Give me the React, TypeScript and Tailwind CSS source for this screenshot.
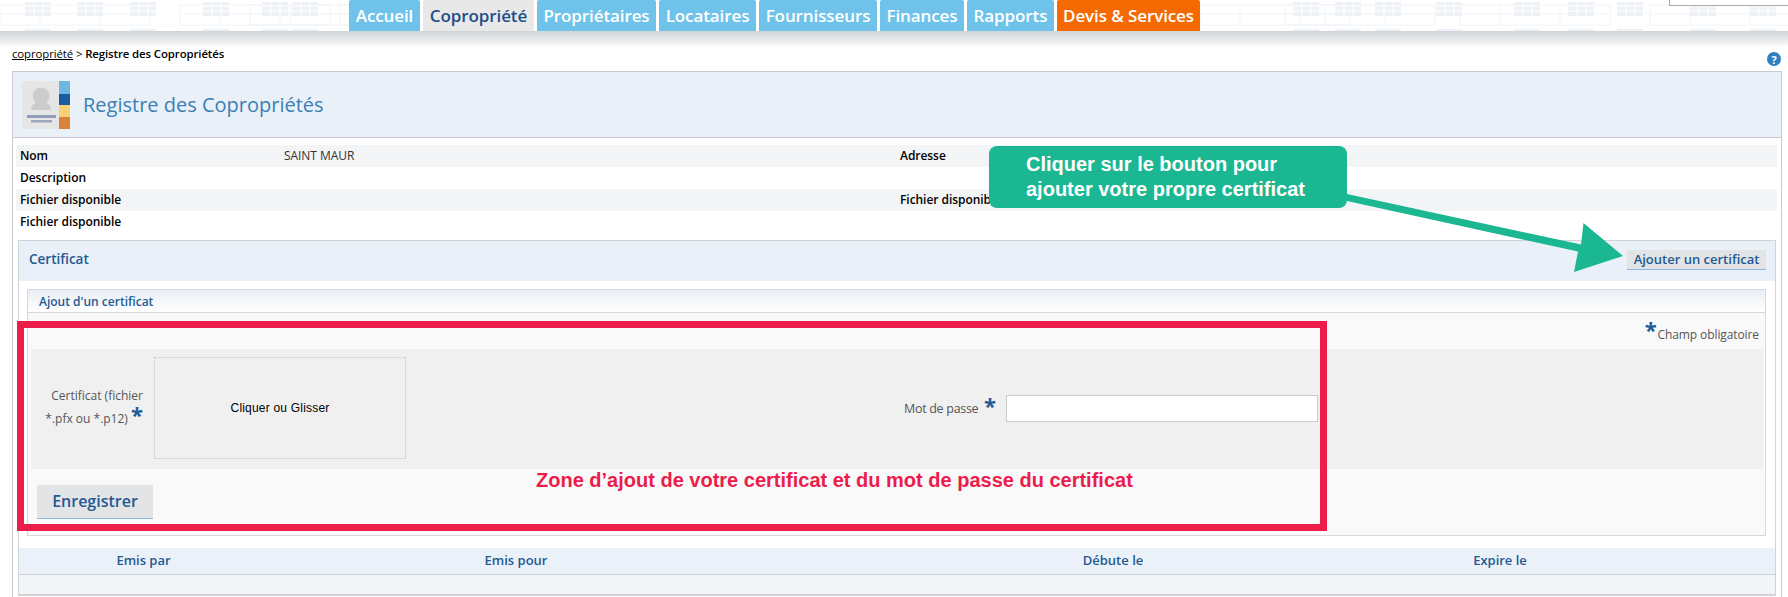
const tabs = [
  { label: "Accueil", className: "w-[71px] bg-[#6fc3ea] text-white" },
  { label: "Copropriété", className: "w-[111px] bg-[#e8e8e8] text-[#1c4f8a]" },
  { label: "Propriétaires", className: "w-[119px] bg-[#6fc3ea] text-white" },
  { label: "Locataires", className: "w-[97px] bg-[#6fc3ea] text-white" },
  { label: "Fournisseurs", className: "w-[118px] bg-[#6fc3ea] text-white" },
  { label: "Finances", className: "w-[84px] bg-[#6fc3ea] text-white" },
  { label: "Rapports", className: "w-[87px] bg-[#6fc3ea] text-white" },
  { label: "Devis & Services", className: "w-[143px] bg-[#f56a00] text-white" },
];

const infoRows = [
  { label: "Nom", value: "SAINT MAUR", label2: "Adresse", className: "bg-[#f3f4f6]" },
  { label: "Description", value: "", label2: "", className: "bg-white" },
  { label: "Fichier disponible", value: "", label2: "Fichier disponible", className: "bg-[#f3f4f6]" },
  { label: "Fichier disponible", value: "", label2: "", className: "bg-white" },
];

const windowGroups = [25, 77, 130, 203, 262, 292, 1293, 1335, 1375, 1436, 1514, 1568, 1617, 1690, 1750];
const outlineGroups = [0, 180, 250, 340, 1200, 1285, 1460, 1650];

function BuildingPattern() {
  return (
    <svg className="absolute inset-0 h-[31px] w-full" viewBox="0 0 1788 31" fill="none">
      {outlineGroups.map((x) => (
        <g key={x} stroke="#f1f4f7" strokeWidth="1">
          <rect x={x} y="5" width="150" height="20" />
          <path d={`M${x} 14H${x + 150}M${x + 40} 5V25M${x + 100} 5V25`} />
        </g>
      ))}
      {windowGroups.map((x) => (
        <g key={x}>
          <rect x={x} y="2" width="26" height="14" fill="#eef2f6" />
          <path d={`M${x} 6H${x + 26}M${x} 11H${x + 26}M${x + 9} 2V16M${x + 18} 2V16`} stroke="#fafbfc" strokeWidth="1.5" />
          <rect x={x} y="29" width="26" height="2" fill="#eef2f6" />
        </g>
      ))}
    </svg>
  );
}

function RegisterIcon() {
  return (
    <svg width="48" height="48" viewBox="0 0 48 48" className="shrink-0">
      <rect x="0" y="0" width="40" height="48" rx="4" fill="#e6e6e6" />
      <rect x="37" y="0" width="11" height="13" fill="#6fb6e2" />
      <rect x="37" y="13" width="11" height="11" fill="#1a5c9e" />
      <rect x="37" y="24" width="11" height="12" fill="#f8cf73" />
      <rect x="37" y="36" width="11" height="12" fill="#d9823b" />
      <circle cx="19" cy="15" r="8.5" fill="#cbcdcc" />
      <path d="M9 29c0-5 3-7 7-8h6c4 1 7 3 7 8z" fill="#cbcdcc" />
      <rect x="5" y="34" width="29" height="3" fill="#8f9db8" />
      <rect x="9" y="39" width="21" height="2.5" fill="#9aa6bd" />
    </svg>
  );
}

function RequiredStar() {
  return <span className="font-['Open_Sans',sans-serif] text-[22px] leading-[14px] font-bold text-[#1f5a93]">*</span>;
}

export default function App() {
  return (
    <div className="relative h-[597px] w-[1788px] overflow-hidden bg-white font-['Open_Sans',sans-serif]">
      <header className="relative h-[31px] bg-white">
        <BuildingPattern />
        <nav className="relative ml-[349px] flex h-[31px] gap-[3px]">
          {tabs.map((tab) => (
            <a
              key={tab.label}
              className={`flex items-center justify-center rounded-t-[2px] text-[17px] font-semibold tracking-[-0.1px] ${tab.className}`}
            >
              {tab.label}
            </a>
          ))}
        </nav>
        <div className="absolute top-0 right-0 h-[6px] w-[119px] border-b border-l border-[#a8a8a8] bg-white" />
      </header>
      <div className="h-[15px] bg-gradient-to-b from-[#cfd4d7] to-[#f9fafa]" />

      <main className="pr-[6px] pl-[12px]">
        <div className="flex h-[25px] items-start justify-between">
          <p className="mt-px text-[11.4px] leading-[14px] tracking-[-0.1px] text-black">
            <span className="underline">copropriété</span> &gt; <span className="font-semibold">Registre des Copropriétés</span>
          </p>
          <span className="mt-[6px] mr-px flex h-[14px] w-[14px] items-center justify-center rounded-full bg-[#2e80c2] text-[11px] leading-none font-bold text-white">
            ?
          </span>
        </div>

        <section className="h-[600px] border border-[#c8ccd0]">
          <div className="flex h-[66px] items-center gap-[13px] border-b border-[#c8ccd0] bg-[#e9f0f8] pl-[9px]">
            <RegisterIcon />
            <h1 className="text-[20px] text-[#3a7fb5]">Registre des Copropriétés</h1>
          </div>

          <div className="mt-[7px] mr-[4px] ml-[3px]">
            {infoRows.map((row, index) => (
              <div key={index} className={`grid h-[22px] grid-cols-[264px_616px_1fr] items-center pl-[4px] text-[12px] tracking-[-0.05px] text-black ${row.className}`}>
                <span className="font-semibold">{row.label}</span>
                <span className="text-[12px] text-[#333]">{row.value}</span>
                <span className="font-semibold">{row.label2}</span>
              </div>
            ))}
          </div>

          <div className="mt-[7px] mr-[5px] ml-[5px] border border-[#d0d4d8]">
            <div className="flex h-[40px] items-center justify-between bg-[#e9f0f8] pr-[9px] pl-[10px]">
              <h2 className="pb-[4px] text-[13.5px] font-semibold text-[#1f5a93]">Certificat</h2>
              <button className="mt-[-3px] h-[20px] w-[139px] border-b border-[#8bb8e0] bg-[#e2e4e6] text-[13px] font-semibold text-[#1f5a93]">
                Ajouter un certificat
              </button>
            </div>

            <div className="mt-[8px] mr-[9px] ml-[8px] h-[247px] border border-[#d6d9dc] bg-[#f9f9f9]">
              <div className="flex h-[23px] items-center border-b border-[#d6d9dc] bg-gradient-to-b from-[#e8eff5] to-white pt-px pl-[11px] text-[12px] font-semibold text-[#1f5a93]">
                Ajout d'un certificat
              </div>
              <div className="flex h-[36px] items-center justify-end gap-px pt-[8px] pr-[6px] text-[12px] tracking-[-0.1px] text-[#555]">
                <span className="mb-[8px] leading-[14px]">
                  <RequiredStar />
                </span>
                <span>Champ obligatoire</span>
              </div>
              <div className="mr-[2px] ml-[3px] flex h-[120px] items-center bg-[#f0f0f0]">
                <div className="mb-[4px] w-[112px] text-right text-[12px] leading-[22px] text-[#555]">
                  Certificat (fichier *.pfx ou *.p12) <RequiredStar />
                </div>
                <div className="mb-[2px] ml-[11px] flex h-[102px] w-[252px] items-center justify-center border border-dotted border-[#c4c4c4] font-['Liberation_Sans',sans-serif] text-[12px] tracking-[0.2px] text-black">
                  Cliquer ou Glisser
                </div>
                <div className="mb-[2px] ml-[498px] flex items-center">
                  <span className="mt-[3px] w-[74px] text-[12.5px] tracking-[-0.3px] whitespace-nowrap text-[#555]">Mot de passe</span>
                  <span className="ml-[6px] w-[22px]">
                    <RequiredStar />
                  </span>
                  <input className="h-[27px] w-[312px] border border-[#ccc] bg-white" />
                </div>
              </div>
              <button className="mt-[16px] ml-[9px] h-[34px] w-[116px] border-b border-[#8bb8e0] bg-[#e2e4e6] pb-[2px] text-[16px] font-semibold text-[#1f5a93]">
                Enregistrer
              </button>
            </div>

            <div className="mt-[12px] grid h-[27px] grid-cols-[249px_496px_698px_76px] items-center border-b border-[#d0d4d8] bg-[#ebf1f8] text-center text-[13px] font-semibold text-[#1f5a93]">
              <span>Emis par</span>
              <span>Emis pour</span>
              <span>Débute le</span>
              <span>Expire le</span>
            </div>
            <div className="h-[20px] border-b border-[#d0d4d8] bg-[#f3f4f6]" />
          </div>
        </section>
      </main>

      {/* annotations posees par dessus la capture */}
      <div className="absolute top-[321px] left-[17px] h-[210px] w-[1310px] border-[7px] border-[#ec1c4b]" />
      <p className="absolute top-[468px] left-[536px] font-['Liberation_Sans',sans-serif] text-[20px] leading-[24px] font-bold text-[#ec1c4b]">
        Zone d’ajout de votre certificat et du mot de passe du certificat
      </p>
      <div className="absolute top-[146px] left-[989px] h-[62px] w-[358px] rounded-[8px] bg-[#1ab792] pt-[6px] pl-[37px] font-['Liberation_Sans',sans-serif] text-[20px] leading-[25px] font-bold text-white">
        Cliquer sur le bouton pour
        <br />
        ajouter votre propre certificat
      </div>
      <svg className="absolute top-0 left-0" width="1788" height="597" viewBox="0 0 1788 597" fill="none" pointerEvents="none">
        <path d="M1347 194L1581 244.5L1583.5 223L1623 256L1574 272L1578 251.5L1347 201Z" fill="#1ab792" />
      </svg>
    </div>
  );
}
